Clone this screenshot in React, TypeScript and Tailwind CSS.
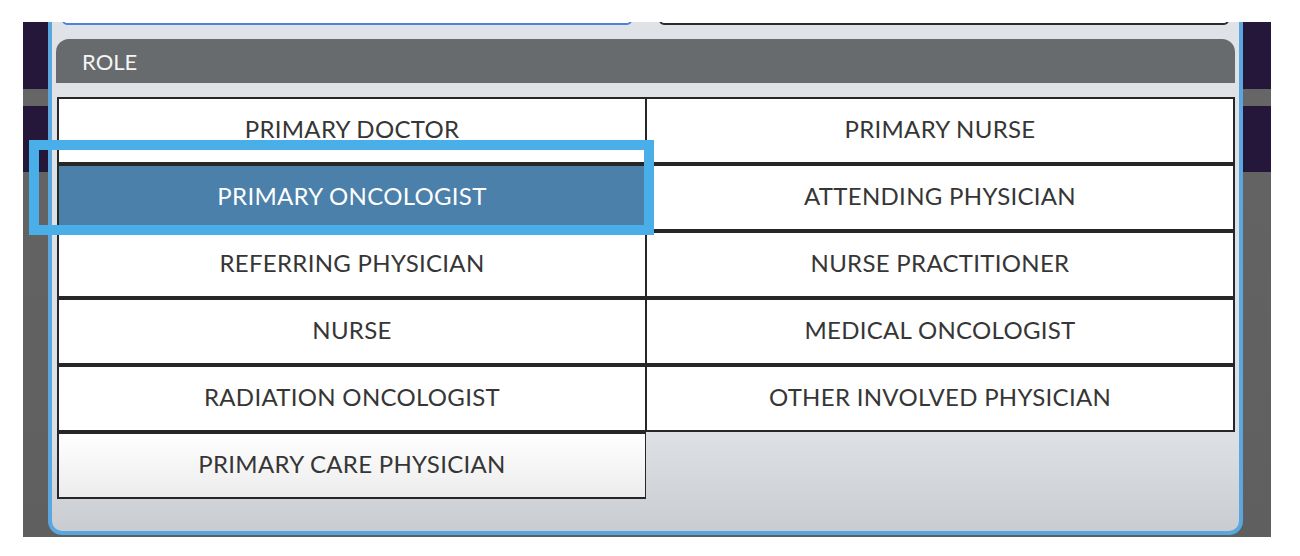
const roles = [
  "PRIMARY DOCTOR",
  "PRIMARY NURSE",
  "PRIMARY ONCOLOGIST",
  "ATTENDING PHYSICIAN",
  "REFERRING PHYSICIAN",
  "NURSE PRACTITIONER",
  "NURSE",
  "MEDICAL ONCOLOGIST",
  "RADIATION ONCOLOGIST",
  "OTHER INVOLVED PHYSICIAN",
  "PRIMARY CARE PHYSICIAN",
];

const selected = "PRIMARY ONCOLOGIST";

function RoleCell({ label, index }: { label: string; index: number }) {
  const isLeft = index % 2 === 0;
  const isSelected = label === selected;
  const isLast = index === roles.length - 1;

  return (
    <div
      className={`flex h-[67px] items-center justify-center border-y-2 border-[#262626] pb-[4px] text-[24px] tracking-[0.3px] ${
        isLeft ? "border-l-2 border-r" : "border-l border-r-2"
      } ${
        isSelected
          ? "bg-[#4a80a9] text-white"
          : isLast
            ? "bg-[linear-gradient(to_bottom,#ffffff,#ececec)] text-[#363636]"
            : "bg-white text-[#363636]"
      }`}
    >
      {label}
    </div>
  );
}

export default function App() {
  return (
    <div className="relative h-[556px] w-[1300px] bg-white pt-[22px] pl-[23px] font-['Lato',sans-serif]">
      {/* backdrop behind the modal */}
      <div className="h-[515px] w-[1248px] overflow-hidden bg-[linear-gradient(to_bottom,#24173a_0px,#24173a_67px,#666666_67px,#666666_84px,#24173a_84px,#24173a_150px,#636363_150px,#5f5f5f_100%)] pl-[25px]">
        <div className="flex h-[513px] w-[1195px] flex-col rounded-b-[14px] border-x-4 border-b-4 border-[#5aa7e0] bg-[linear-gradient(to_bottom,#dfe3e7_0%,#dce0e4_82%,#c9cdd1_100%)] px-[4px]">
          {/* inputs cut off at the top */}
          <div className="flex gap-[27px] px-[6px]">
            <div className="-mt-[20px] h-[23px] flex-1 rounded-[5px] border-2 border-[#4d80e0] bg-white" />
            <div className="-mt-[20px] h-[23px] flex-1 rounded-[5px] border-2 border-[#2b2b2b] bg-white" />
          </div>

          <div className="mt-[14px] flex h-[44px] items-center rounded-t-[13px] bg-[#676b6e] pl-[26px] text-[22px] text-[#f5f5f5]">
            ROLE
          </div>

          <div className="mt-[14px] ml-[1px] grid grid-cols-2">
            {roles.map((role, i) => (
              <RoleCell key={role} label={role} index={i} />
            ))}
          </div>
        </div>
      </div>

      {/* focus highlight */}
      <div className="absolute top-[140px] left-[29px] h-[95px] w-[625px] border-[10px] border-[#4aaee8]" />
    </div>
  );
}
